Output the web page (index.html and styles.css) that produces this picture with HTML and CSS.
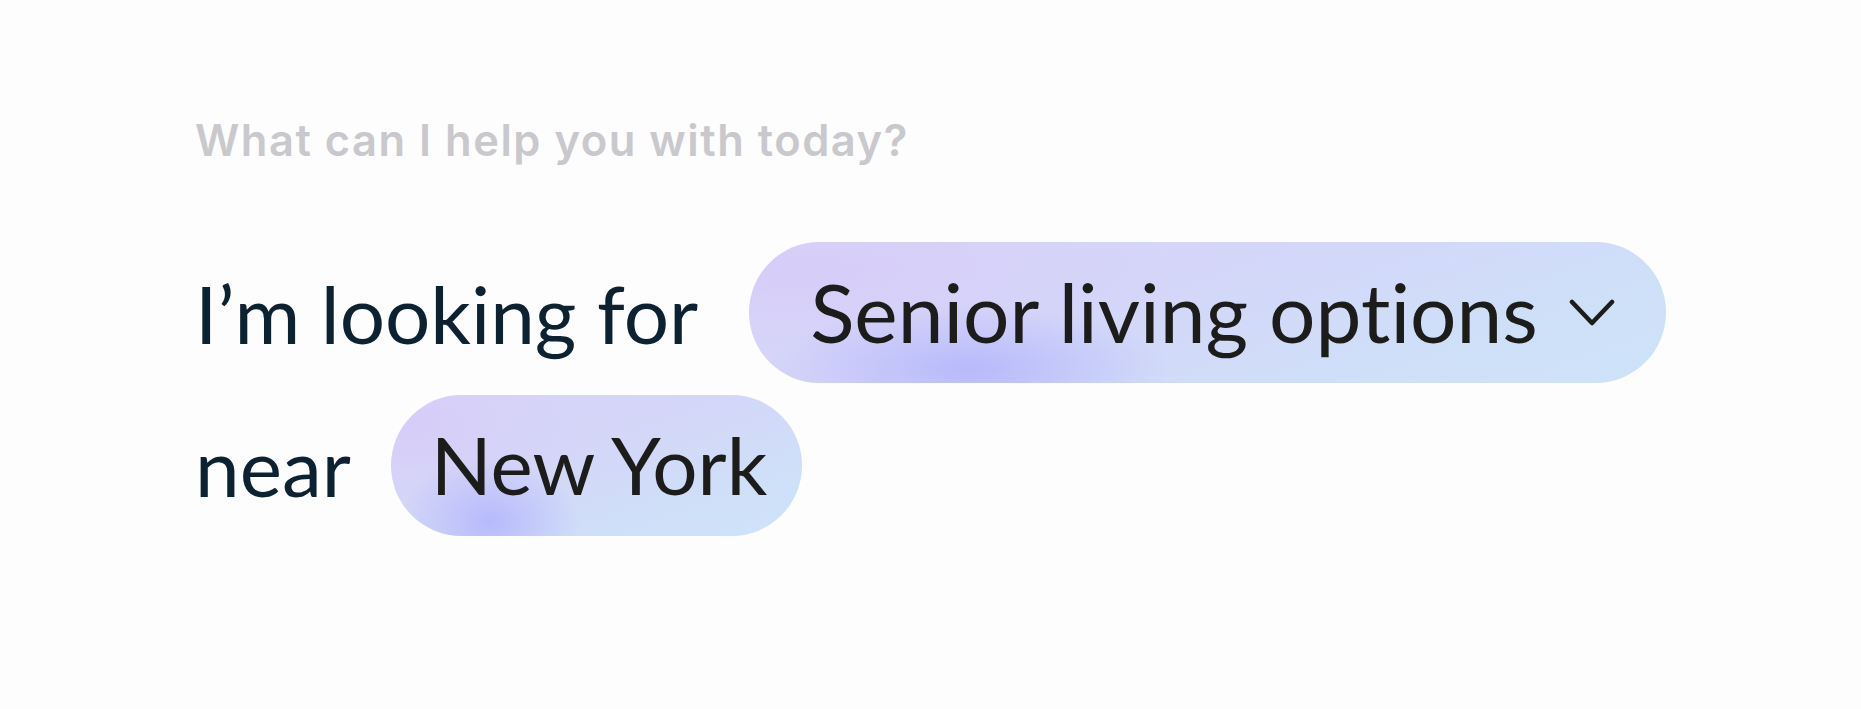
FILE: index.html
```html
<!DOCTYPE html>
<html lang="en">
<head>
<meta charset="utf-8">
<title>Search prompt</title>
<link rel="stylesheet" href="styles.css">
</head>
<body>
<main class="prompt">
  <p class="question">What can I help you with today?</p>
  <div class="sentence">
    <div class="line">
      <span class="word word-first">I’m looking for</span>
      <button class="chip chip-select" type="button">
        <span class="chip-label">Senior living options</span>
        <svg class="chevron" width="46" height="28" viewBox="0 0 46 28" aria-hidden="true">
          <path d="M3 3 L23 24 L43 3" fill="none" stroke="#1c1c1a" stroke-width="4.5" stroke-linecap="round" stroke-linejoin="round"/>
        </svg>
      </button>
    </div>
    <div class="line">
      <span class="word word-near">near</span>
      <span class="chip chip-place"><span class="chip-label">New York</span></span>
    </div>
  </div>
</main>
</body>
</html>
```
FILE: styles.css
```css
html, body {
  margin: 0;
  padding: 0;
  background: #fdfdfd;
}

body {
  font-family: "Lato", "Liberation Sans", sans-serif;
  font-variant-ligatures: none;
  width: 1861px;
  height: 709px;
  overflow: hidden;
}

.prompt {
  padding: 112px 0 0 195px;
}

.question {
  margin: 0;
  font-family: "Inter", "Lato", sans-serif;
  font-size: 43.5px;
  line-height: 56px;
  font-weight: 600;
  letter-spacing: 1.5px;
  color: #c9c9cd;
}

.sentence {
  margin-top: 74px;
  display: flex;
  flex-direction: column;
  gap: 12px;
}

.line {
  display: flex;
  align-items: center;
  height: 141px;
}

.word {
  font-size: 80px;
  line-height: 1;
  color: #0d2230;
}

.word-first {
  margin-right: 51px;
}

.word-near {
  margin-right: 40px;
}

.chip {
  display: inline-flex;
  align-items: center;
  height: 141px;
  box-sizing: border-box;
  border: none;
  border-radius: 71px;
  font-family: inherit;
  font-variant-ligatures: none;
  font-size: 82px;
  color: #1c1c1a;
  background:
    radial-gradient(ellipse 22% 45% at 24% 90%, rgba(178, 180, 252, 0.85), rgba(178, 180, 252, 0) 100%),
    radial-gradient(ellipse 40% 60% at 5% 20%, rgba(214, 204, 248, 0.9), rgba(214, 204, 248, 0) 100%),
    linear-gradient(160deg, #d9d4f8 0%, #d4d6f8 40%, #cfdff8 75%, #cde3f8 100%);
}

.chip-label {
  line-height: 1;
  position: relative;
  top: -2px;
}

.chip-select {
  padding: 0 51px 0 61px;
  cursor: pointer;
  gap: 31px;
}

.chip-place {
  padding: 0 35px 0 40px;
  font-size: 80px;
}

.chevron {
  display: block;
  flex: none;
}
```
